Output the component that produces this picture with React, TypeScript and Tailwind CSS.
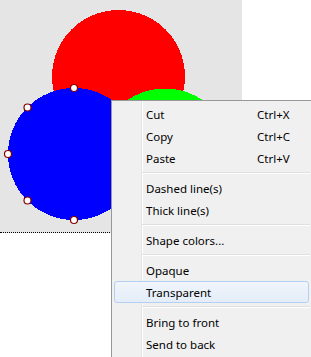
import React from "react";

type Item = { label?: string; shortcut?: string; sep?: boolean; hi?: boolean };

const items: Item[] = [
  { label: "Cut", shortcut: "Ctrl+X" },
  { label: "Copy", shortcut: "Ctrl+C" },
  { label: "Paste", shortcut: "Ctrl+V" },
  { sep: true },
  { label: "Dashed line(s)" },
  { label: "Thick line(s)" },
  { sep: true },
  { label: "Shape colors..." },
  { sep: true },
  { label: "Opaque" },
  { label: "Transparent", hi: true },
  { sep: true },
  { label: "Bring to front" },
  { label: "Send to back" },
];

const handles: [number, number][] = [
  [74, 88],
  [27.5, 107.5],
  [8, 154],
  [27.5, 200.5],
  [74, 220],
];

export default function App() {
  return (
    <div
      className="relative w-[311px] h-[357px] bg-white overflow-hidden"
      style={{ fontFamily: '"Noto Sans", "Open Sans", sans-serif' }}
    >
      <div className="w-[242px] h-[233px] bg-[#e5e5e5] border-b border-dotted border-black">
        <svg width="242" height="232" shapeRendering="crispEdges" className="block">
          <circle cx="118.5" cy="76.5" r="66.5" fill="#ff0000" />
          <circle cx="165" cy="155" r="66.5" fill="#00ff00" />
          <circle cx="74" cy="154" r="66" fill="#0000ff" />
          {handles.map(([x, y], i) => (
            <circle key={i} cx={x} cy={y} r="3.5" fill="#ffffff" stroke="#800000" strokeWidth="1.2" shapeRendering="auto" />
          ))}
        </svg>
      </div>

      <div className="absolute left-[111px] top-[100px] w-[210px] h-[270px] flex flex-col border-l border-t border-[#979797] pt-[2px] bg-[linear-gradient(to_right,#f0f0f0_29px,#e2e3e3_29px,#e2e3e3_30px,#ffffff_30px,#ffffff_31px,#f0f0f0_31px)]">
        {items.map((it, i) =>
          it.sep ? (
            <div key={i} className="ml-[30px] w-[168px] my-[3px] h-[2px] border-t border-b border-t-[#e0e0e0] border-b-white" />
          ) : (
            <div
              key={i}
              className={`mx-[2px] w-[195px] h-[22px] flex items-center pt-px text-[11.5px] text-black rounded-[3px] border ${
                it.hi
                  ? "border-[#b4d0f0] bg-gradient-to-b from-[#f1f5fb] to-[#e4edf8]"
                  : "border-transparent"
              }`}
            >
              <span className="ml-[31px] w-[111px] leading-none">{it.label}</span>
              {it.shortcut && <span className="leading-none">{it.shortcut}</span>}
            </div>
          )
        )}
      </div>
    </div>
  );
}
